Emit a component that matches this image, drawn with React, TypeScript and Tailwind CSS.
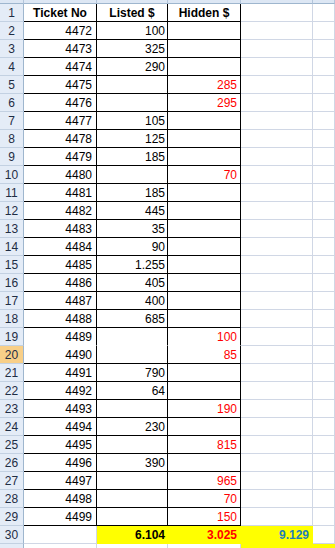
import React from "react";

type Row = { t: string; l: string; h: string };

const data: Row[] = [
  { t: "4472", l: "100", h: "" },
  { t: "4473", l: "325", h: "" },
  { t: "4474", l: "290", h: "" },
  { t: "4475", l: "", h: "285" },
  { t: "4476", l: "", h: "295" },
  { t: "4477", l: "105", h: "" },
  { t: "4478", l: "125", h: "" },
  { t: "4479", l: "185", h: "" },
  { t: "4480", l: "", h: "70" },
  { t: "4481", l: "185", h: "" },
  { t: "4482", l: "445", h: "" },
  { t: "4483", l: "35", h: "" },
  { t: "4484", l: "90", h: "" },
  { t: "4485", l: "1.255", h: "" },
  { t: "4486", l: "405", h: "" },
  { t: "4487", l: "400", h: "" },
  { t: "4488", l: "685", h: "" },
  { t: "4489", l: "", h: "100" },
  { t: "4490", l: "", h: "85" },
  { t: "4491", l: "790", h: "" },
  { t: "4492", l: "64", h: "" },
  { t: "4493", l: "", h: "190" },
  { t: "4494", l: "230", h: "" },
  { t: "4495", l: "", h: "815" },
  { t: "4496", l: "390", h: "" },
  { t: "4497", l: "", h: "965" },
  { t: "4498", l: "", h: "70" },
  { t: "4499", l: "", h: "150" },
];

const cellBase = "h-[18px] border-r border-b leading-[17px] pt-[1px] text-[12px] whitespace-nowrap overflow-hidden";

function RowHead({ n, active }: { n?: number; active?: boolean }) {
  return (
    <div
      className={`${cellBase} border-r-[#9eb6ce] border-b-[#c3d1e2] text-center text-[#1f2d44] ${
        active ? "bg-[#f8cf88]" : "bg-[#e4ecf7]"
      }`}
    >
      {n}
    </div>
  );
}

export default function App() {
  return (
    <div
      className="w-[335px] h-[548px] overflow-hidden bg-white"
      style={{ fontFamily: '"Liberation Sans", Arial, sans-serif' }}
    >
      <div className="grid grid-cols-[24px_73px_71px_73px_72px_1fr]">
        {/* column header strip */}
        {Array.from({ length: 6 }).map((_, i) => (
          <div key={`ch${i}`} className="h-[4px] bg-[#dde7f4] border-r border-b border-r-[#b3c5db] border-b-[#9eb6ce]" />
        ))}

        {/* row 1 */}
        <RowHead n={1} />
        <div className={`${cellBase} border-black text-center font-bold text-black`}>Ticket No</div>
        <div className={`${cellBase} border-black text-center font-bold text-black`}>Listed $</div>
        <div className={`${cellBase} border-black text-center font-bold text-black`}>Hidden $</div>
        <div className={`${cellBase} border-[#d0d7e5]`} />
        <div className={`${cellBase} border-[#d0d7e5]`} />

        {data.map((r, i) => {
          const n = i + 2;
          const bb = n === 19 ? "border-b-white" : "border-b-black";
          return (
            <React.Fragment key={n}>
              <RowHead n={n} active={n === 20} />
              <div className={`${cellBase} border-r-black ${bb} text-right pr-[4px] text-black`}>{r.t}</div>
              <div className={`${cellBase} border-r-black ${bb} text-right pr-[2px] text-black`}>{r.l}</div>
              <div className={`${cellBase} border-r-black ${bb} text-right pr-[3px] text-[#ff0000]`}>{r.h}</div>
              <div className={`${cellBase} border-[#d0d7e5]`} />
              <div className={`${cellBase} border-[#d0d7e5]`} />
            </React.Fragment>
          );
        })}

        {/* row 30 */}
        <RowHead n={30} />
        <div className={`${cellBase} border-[#d0d7e5]`} />
        <div className={`${cellBase} border-[#ffff00] bg-[#ffff00] text-right pr-[2px] font-bold text-black`}>6.104</div>
        <div className={`${cellBase} border-[#ffff00] bg-[#ffff00] text-right pr-[3px] font-bold text-[#ff0000]`}>3.025</div>
        <div className={`${cellBase} border-[#ffff00] bg-[#ffff00] text-right pr-[3px] font-bold text-[#1f7fb4]`}>9.129</div>
        <div className={`${cellBase} border-[#d0d7e5]`} />

        {/* row 31 (partially visible) */}
        <RowHead />
        <div className={`${cellBase} border-[#d0d7e5]`} />
        <div className={`${cellBase} border-[#d0d7e5]`} />
        <div className={`${cellBase} border-[#d0d7e5]`} />
        <div className={`${cellBase} border-[#ffff00] bg-[#ffff00]`} />
        <div className={`${cellBase} border-[#ffff00] bg-[#ffff00]`} />
      </div>
    </div>
  );
}
